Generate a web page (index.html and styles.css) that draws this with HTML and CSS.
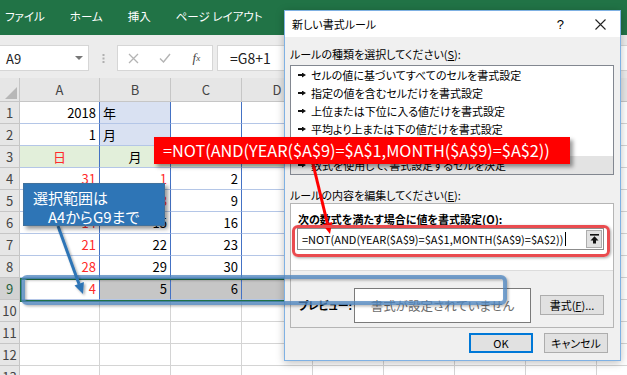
FILE: index.html
```html
<!DOCTYPE html>
<html lang="ja">
<head>
    <meta charset="UTF-8">
    <title>新しい書式ルール</title>
    <link rel="stylesheet" href="styles.css">
</head>
<body>
    <div class="ribbon">
        <span>ファイル</span>
        <span>ホーム</span>
        <span>挿入</span>
        <span>ページ レイアウト</span>
        <span>数式</span>
    </div>

    <div class="formula-bar">
        <div class="name-box">A9<span class="drop"></span></div>
        <div class="grip">
            <svg width="3" height="9" viewBox="0 0 3 9"><rect x="0.5" y="0" width="2" height="2" fill="#b0b0b0"/><rect x="0.5" y="3.5" width="2" height="2" fill="#b0b0b0"/><rect x="0.5" y="7" width="2" height="2" fill="#b0b0b0"/></svg>
        </div>
        <div class="fx-box">
            <span class="fx-btn">
                <svg width="11" height="11" viewBox="0 0 11 11"><path d="M1 1L10 10M10 1L1 10" stroke="#b4b4b4" stroke-width="1.3"/></svg>
            </span>
            <span class="fx-btn">
                <svg width="12" height="10" viewBox="0 0 12 10"><path d="M1 5.5L4.5 9L11 1" stroke="#b4b4b4" stroke-width="1.4" fill="none"/></svg>
            </span>
            <span class="fx-btn fx">f<sub>x</sub></span>
        </div>
        <div class="formula-input">=G8+1</div>
    </div>

    <div class="sheet">
        <div class="row head">
            <div class="rh corner"><span class="tri"></span></div>
            <div class="c">A</div><div class="c">B</div><div class="c">C</div><div class="c">D</div>
            <div class="c">E</div><div class="c">F</div><div class="c">G</div><div class="c">H</div><div class="c"></div>
        </div>
        <div class="row">
            <div class="rh">1</div>
            <div class="c t">2018</div><div class="c t blue l">年</div><div class="c t"></div><div class="c t"></div>
            <div class="c t"></div><div class="c t"></div><div class="c t"></div><div class="c"></div><div class="c"></div>
        </div>
        <div class="row">
            <div class="rh">2</div>
            <div class="c t">1</div><div class="c t blue l">月</div><div class="c t"></div><div class="c t"></div>
            <div class="c t"></div><div class="c t"></div><div class="c t"></div><div class="c"></div><div class="c"></div>
        </div>
        <div class="row">
            <div class="rh">3</div>
            <div class="c t green m red">日</div><div class="c t green m">月</div><div class="c t green"></div><div class="c t green"></div>
            <div class="c t green"></div><div class="c t green"></div><div class="c t green"></div><div class="c"></div><div class="c"></div>
        </div>
        <div class="row">
            <div class="rh">4</div>
            <div class="c t red">31</div><div class="c t red">1</div><div class="c t">2</div><div class="c t"></div>
            <div class="c t"></div><div class="c t"></div><div class="c t"></div><div class="c"></div><div class="c"></div>
        </div>
        <div class="row">
            <div class="rh">5</div>
            <div class="c t red">7</div><div class="c t red">8</div><div class="c t">9</div><div class="c t"></div>
            <div class="c t"></div><div class="c t"></div><div class="c t"></div><div class="c"></div><div class="c"></div>
        </div>
        <div class="row">
            <div class="rh">6</div>
            <div class="c t red">14</div><div class="c t">15</div><div class="c t">16</div><div class="c t"></div>
            <div class="c t"></div><div class="c t"></div><div class="c t"></div><div class="c"></div><div class="c"></div>
        </div>
        <div class="row">
            <div class="rh">7</div>
            <div class="c t red">21</div><div class="c t">22</div><div class="c t">23</div><div class="c t"></div>
            <div class="c t"></div><div class="c t"></div><div class="c t"></div><div class="c"></div><div class="c"></div>
        </div>
        <div class="row">
            <div class="rh">8</div>
            <div class="c t red">28</div><div class="c t">29</div><div class="c t">30</div><div class="c t"></div>
            <div class="c t"></div><div class="c t"></div><div class="c t"></div><div class="c"></div><div class="c"></div>
        </div>
        <div class="row">
            <div class="rh active">9</div>
            <div class="c t red">4</div><div class="c t sel">5</div><div class="c t sel">6</div><div class="c t sel"></div>
            <div class="c t sel"></div><div class="c t sel"></div><div class="c t sel"></div><div class="c"></div><div class="c"></div>
        </div>
        <div class="row">
            <div class="rh">10</div>
            <div class="c"></div><div class="c"></div><div class="c"></div><div class="c"></div>
            <div class="c"></div><div class="c"></div><div class="c"></div><div class="c"></div><div class="c"></div>
        </div>
        <div class="row">
            <div class="rh">11</div>
            <div class="c"></div><div class="c"></div><div class="c"></div><div class="c"></div>
            <div class="c"></div><div class="c"></div><div class="c"></div><div class="c"></div><div class="c"></div>
        </div>
        <div class="row">
            <div class="rh">12</div>
            <div class="c"></div><div class="c"></div><div class="c"></div><div class="c"></div>
            <div class="c"></div><div class="c"></div><div class="c"></div><div class="c"></div><div class="c"></div>
        </div>
        <div class="row">
            <div class="rh">13</div>
            <div class="c"></div><div class="c"></div><div class="c"></div><div class="c"></div>
            <div class="c"></div><div class="c"></div><div class="c"></div><div class="c"></div><div class="c"></div>
        </div>
    </div>

    <!-- A9:G9 selection outline -->
    <div class="selection"></div>

    <div class="dialog">
        <div class="dlg-title">
            <span>新しい書式ルール</span>
            <span class="help">?</span>
            <span class="close">
                <svg width="11" height="11" viewBox="0 0 11 11"><path d="M0.5 0.5L10.5 10.5M10.5 0.5L0.5 10.5" stroke="#222" stroke-width="1.1"/></svg>
            </span>
        </div>
        <div class="dlg-body">
            <div class="label">ルールの種類を選択してください(<u>S</u>):</div>
            <ul class="rule-list">
                <li><i class="arrow"></i>セルの値に基づいてすべてのセルを書式設定</li>
                <li><i class="arrow"></i>指定の値を含むセルだけを書式設定</li>
                <li><i class="arrow"></i>上位または下位に入る値だけを書式設定</li>
                <li><i class="arrow"></i>平均より上または下の値だけを書式設定</li>
                <li><i class="arrow"></i>一意の値または重複する値だけを書式設定</li>
                <li class="current"><i class="arrow"></i>数式を使用して、書式設定するセルを決定</li>
            </ul>
            <div class="label second">ルールの内容を編集してください(<u>E</u>):</div>
            <div class="group">
                <div class="group-top">
                    <div class="bold-label">次の数式を満たす場合に値を書式設定(<u>O</u>):</div>
                    <div class="formula-field">
                        <span class="ftext">=NOT(AND(YEAR($A$9)=$A$1,MONTH($A$9)=$A$2))</span><span class="caret"></span>
                        <span class="ref-btn">
                            <svg width="9" height="10" viewBox="0 0 9 10"><rect x="0" y="0" width="9" height="1.6" fill="#111"/><path d="M4.5 2.2L8.5 6.4H6V9.6H3V6.4H0.5Z" fill="#111"/></svg>
                        </span>
                    </div>
                </div>
                <div class="preview-row">
                    <span class="preview-label">プレビュー:</span>
                    <div class="preview-box">書式が設定されていません</div>
                    <button class="btn">書式(<u>F</u>)...</button>
                </div>
            </div>
            <div class="actions">
                <button class="btn ok">OK</button>
                <button class="btn">キャンセル</button>
            </div>
        </div>
    </div>

    <svg class="marks" width="627" height="375" viewBox="0 0 627 375">
        <defs>
            <filter id="shadow" x="-20%" y="-20%" width="140%" height="160%">
                <feDropShadow dx="1.5" dy="1.5" stdDeviation="1.2" flood-color="#000" flood-opacity="0.35"/>
            </filter>
        </defs>
        <rect x="23" y="277" width="482" height="26" rx="4" fill="none" stroke="#4f87c0" stroke-opacity="0.75" stroke-width="4" filter="url(#shadow)"/>
        <g filter="url(#shadow)">
            <line x1="58" y1="226" x2="79" y2="284" stroke="#2e75b6" stroke-width="3"/>
            <polygon points="83,294 74.5,285.4 83.9,282" fill="#2e75b6"/>
        </g>
        <line x1="313" y1="164" x2="327.4" y2="223.3" stroke="#f00" stroke-width="3"/>
        <polygon points="330,234 322.5,224.5 332.3,222.1" fill="#f00"/>
    </svg>

    <div class="formula-hilite"></div>
    <div class="callout red-note">=NOT(AND(YEAR($A$9)=$A$1,MONTH($A$9)=$A$2))</div>
    <div class="callout blue-note">
        <div>選択範囲は</div>
        <div class="indent">A4からG9まで</div>
    </div>
</body>
</html>
```

FILE: styles.css
```css
* {
    box-sizing: border-box;
}
body {
    margin: 0;
    width: 627px;
    height: 375px;
    overflow: hidden;
    position: relative;
    background: #fff;
    color: #000;
    font-family: "Noto Sans CJK JP", sans-serif;
    font-feature-settings: "palt";
}

/* excel chrome */
.ribbon {
    height: 35px;
    background: #217346;
    color: #fff;
    font-size: 11.5px;
    display: flex;
    align-items: center;
    gap: 25px;
    padding: 0 0 3px 5px;
}
.formula-bar {
    height: 43px;
    background: #ececec;
    display: flex;
    align-items: flex-start;
    padding-top: 10px;
}
.name-box {
    width: 89px;
    height: 26px;
    background: #fff;
    border: 1px solid #d6d6d6;
    border-left: none;
    display: flex;
    align-items: center;
    padding-left: 6px;
    font-size: 13px;
    color: #222;
}
.name-box .drop {
    margin-left: auto;
    margin-right: 5px;
    border-left: 4px solid transparent;
    border-right: 4px solid transparent;
    border-top: 4px solid #777;
}
.grip {
    width: 28px;
    height: 26px;
    display: flex;
    align-items: center;
    justify-content: center;
}
.fx-box {
    width: 96px;
    height: 26px;
    background: #fff;
    border: 1px solid #d6d6d6;
    display: flex;
}
.fx-btn {
    width: 32px;
    display: flex;
    align-items: center;
    justify-content: center;
}
.fx {
    font-family: "Liberation Serif", serif;
    font-style: italic;
    font-size: 13px;
    color: #444;
}
.fx sub {
    font-size: 9px;
    vertical-align: -2px;
}
.formula-input {
    flex: 1;
    margin-left: 4px;
    height: 26px;
    background: #fff;
    border: 1px solid #d6d6d6;
    border-right: none;
    padding-left: 12px;
    font-size: 14px;
    line-height: 24px;
    color: #222;
}

/* grid */
.sheet {
    width: 668px;
}
.row {
    display: flex;
    height: 22px;
}
.row > div {
    flex: none;
    height: 22px;
    border-right: 1px solid #d4d4d4;
    border-bottom: 1px solid #d4d4d4;
}
.rh {
    width: 20px;
    background: #e6e6e6;
    border-color: #c6c6c6 !important;
    color: #444;
    font-size: 13px;
    text-align: center;
    line-height: 21px;
}
.rh.active {
    background: #d2d2d2;
    color: #1f5f3a;
}
.c {
    width: 71px;
    padding: 0 3px;
    font-size: 13px;
    line-height: 21px;
    text-align: right;
    white-space: nowrap;
}
.row > .c:nth-child(2) {
    width: 80px;
}
.head,
.head > div {
    height: 24px;
}
.head .c {
    background: #e6e6e6;
    border-color: #c6c6c6;
    color: #444;
    text-align: center;
    line-height: 23px;
}
.corner {
    position: relative;
}
.corner .tri {
    position: absolute;
    right: 2px;
    bottom: 2px;
    border-left: 12px solid transparent;
    border-bottom: 12px solid #b7b7b7;
}
.t {
    border-right-color: #4472c4 !important;
    border-bottom-color: #b4c6e7 !important;
}
.l { text-align: left; }
.m { text-align: center; }
.red { color: #ff2a2a; }
.blue { background: #d9e1f2; }
.green { background: #e2efda; }
.sel { background: #c6c6c6; }

.selection {
    position: absolute;
    left: 20px;
    top: 278px;
    width: 506px;
    height: 24px;
    border: 2px solid #217346;
}

/* dialog */
.dialog {
    position: absolute;
    left: 284px;
    top: 10px;
    width: 337px;
    height: 351px;
    background: #f0f0f0;
    border: 1px solid #7fb1e3;
    box-shadow: 0 2px 8px rgba(0, 0, 0, 0.25);
    font-size: 11px;
}
.dlg-title {
    height: 26px;
    background: #fff;
    display: flex;
    align-items: center;
    padding: 0 14px 0 7px;
}
.help {
    margin-left: auto;
    margin-right: 31px;
    font-size: 13px;
    font-family: "Liberation Sans", sans-serif;
}
.close {
    display: flex;
}
.dlg-body {
    padding: 0 6px 0 5px;
}
.label {
    margin-top: 9px;
    line-height: 16px;
}
.label.second {
    margin-top: 12px;
}
.rule-list {
    list-style: none;
    margin: 3px 0 0;
    padding: 0;
    background: #fff;
    border: 1px solid #828790;
}
.rule-list li {
    height: 18px;
    line-height: 18px;
    padding-left: 7px;
    display: flex;
    align-items: center;
}
.rule-list li.current {
    background: #e3e3e3;
}
.arrow {
    width: 8px;
    height: 5px;
    margin-right: 5px;
    background: #111;
    clip-path: polygon(0 30%, 50% 30%, 50% 0, 100% 50%, 50% 100%, 50% 70%, 0 70%);
}
.group {
    border: 1px solid #b5b5b5;
}
.group-top {
    height: 66px;
    background: #fff;
    padding: 8px 9px 0 6px;
}
.bold-label {
    font-weight: bold;
    line-height: 14px;
    padding-left: 1px;
}
.formula-field {
    margin-top: 2px;
    height: 22px;
    background: #fff;
    border: 1px solid #8c8c8c;
    display: flex;
    align-items: center;
    padding: 0 1px 0 4px;
    font-size: 11px;
}
.caret {
    width: 1px;
    height: 14px;
    background: #000;
    margin-left: 2px;
}
.ref-btn {
    margin-left: auto;
    width: 16px;
    height: 18px;
    background: #e1e1e1;
    border: 1px solid #adadad;
    display: flex;
    align-items: center;
    justify-content: center;
}
.preview-row {
    height: 57px;
    border-top: 1px solid #dcdcdc;
    display: flex;
    align-items: center;
    padding: 12px 0 0 7px;
}
.preview-label {
    width: 56px;
    font-weight: bold;
}
.preview-box {
    width: 177px;
    height: 35px;
    background: #fff;
    border: 1px solid #7a7a7a;
    color: #6d6d6d;
    font-size: 12.5px;
    display: flex;
    align-items: center;
    justify-content: center;
}
.btn {
    height: 20px;
    width: 64px;
    background: #e1e1e1;
    border: 1px solid #adadad;
    font-family: inherit;
    font-feature-settings: "palt";
    font-size: 11px;
    padding: 0;
    color: #000;
}
.preview-row .btn {
    margin-left: 9px;
}
.actions {
    display: flex;
    justify-content: flex-end;
    gap: 11px;
    margin-top: 5px;
    padding-right: 6px;
}
.btn.ok {
    border: 2px solid #0078d7;
}

/* annotations over the screenshot */
.marks {
    position: absolute;
    left: 0;
    top: 0;
}
.formula-hilite {
    position: absolute;
    left: 292px;
    top: 225px;
    width: 318px;
    height: 32px;
    border: 3px solid #ea4b4f;
    border-radius: 6px;
    box-shadow: 1px 1px 3px rgba(0, 0, 0, 0.35);
}
.callout {
    position: absolute;
    color: #fff;
    box-shadow: 3px 3px 4px rgba(0, 0, 0, 0.4);
}
.red-note {
    left: 154px;
    top: 137px;
    width: 416px;
    height: 27px;
    background: #ff0000;
    padding-left: 9px;
    font-size: 16.3px;
    line-height: 27px;
    white-space: nowrap;
}
.blue-note {
    left: 23px;
    top: 183px;
    width: 142px;
    height: 43px;
    background: #2e75b6;
    border: 1px solid #41719c;
    padding: 4px 0 0 9px;
    font-size: 15px;
    line-height: 19px;
}
.blue-note .indent {
    padding-left: 15px;
}
```
